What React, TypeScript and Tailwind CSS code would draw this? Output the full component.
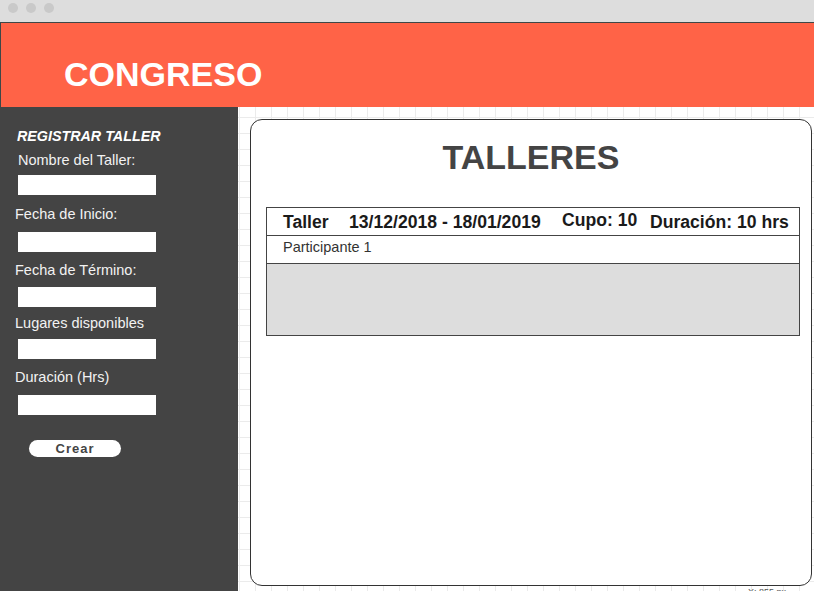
import React from 'react';

const labels = [
  { text: 'Nombre del Taller:', labelClass: 'mt-[8px] pl-[18px]', inputClass: 'mt-[7px]' },
  { text: 'Fecha de Inicio:', labelClass: 'mt-[11px] pl-[15px]', inputClass: 'mt-[10px]' },
  { text: 'Fecha de Término:', labelClass: 'mt-[10px] pl-[15px]', inputClass: 'mt-[9px]' },
  { text: 'Lugares disponibles', labelClass: 'mt-[8px] pl-[15px]', inputClass: 'mt-[8px]' },
  { text: 'Duración (Hrs)', labelClass: 'mt-[10px] pl-[15px]', inputClass: 'mt-[10px]' },
];

function Sidebar() {
  return (
    <aside className="w-[238px] shrink-0 bg-[#444444] flex flex-col pt-[21px]">
      <h2 className="pl-[17px] text-[14.3px] leading-[16px] font-bold italic text-white">REGISTRAR TALLER</h2>
      {labels.map((l) => (
        <React.Fragment key={l.text}>
          <label className={`${l.labelClass} text-[14.5px] leading-[16px] text-[#f2f2f2]`}>{l.text}</label>
          <input className={`${l.inputClass} ml-[18px] w-[138px] h-[20px] bg-white border-0 outline-none`} />
        </React.Fragment>
      ))}
      <button className="mt-[25px] ml-[29px] w-[92px] h-[17px] rounded-full bg-white text-[13px] leading-[17px] font-bold tracking-[1px] text-[#444444]">
        Crear
      </button>
    </aside>
  );
}

function Talleres() {
  return (
    <div className="h-[467px] shrink-0 border border-[#333333] rounded-[12px] bg-white flex flex-col">
      <h1 className="mt-[18px] text-center text-[34px] leading-[38px] font-bold text-[#444444]">TALLERES</h1>

      {/* tabla del taller */}
      <div className="mt-[31px] ml-[15px] w-[534px] border border-[#444444]">
        <div className="h-[27px] grid grid-cols-[66px_213px_88px_1fr] items-center pl-[16px] text-[17.6px] leading-[20px] font-bold text-[#1a1a1a] whitespace-nowrap">
          <span>Taller</span>
          <span>13/12/2018 - 18/01/2019</span>
          <span className="mb-[4px]">Cupo: 10</span>
          <span>Duración: 10 hrs</span>
        </div>
        <div className="h-[28px] border-t border-[#444444] pl-[16px] pt-[3px] text-[14.5px] leading-[16px] text-[#333333]">
          Participante 1
        </div>
        <div className="h-[72px] border-t border-[#444444] bg-[#dddddd]" />
      </div>
    </div>
  );
}

export default function App() {
  return (
    <div className="w-[814px] h-[591px] overflow-hidden flex flex-col bg-white font-['Liberation_Sans',Arial,sans-serif]">
      {/* barra de ventana */}
      <div className="h-[22px] shrink-0 bg-[#dddddd] flex items-start gap-[8px] pl-[8px] pt-[3px]">
        <span className="w-[10px] h-[10px] rounded-full bg-[#c9c9c9]" />
        <span className="w-[10px] h-[10px] rounded-full bg-[#c9c9c9]" />
        <span className="w-[10px] h-[10px] rounded-full bg-[#c9c9c9]" />
      </div>

      {/* encabezado */}
      <header className="h-[85px] shrink-0 bg-[#ff6347] border-t border-l border-[#3e4747] pl-[63px] pt-[32px]">
        <span className="text-[34px] leading-[38px] font-bold text-white">CONGRESO</span>
      </header>

      <div className="flex flex-1 min-h-0">
        <Sidebar />
        <main className="flex-1 flex flex-col pl-[12px] pt-[12px] pr-[2px] bg-white bg-[linear-gradient(to_right,#ebebeb_1px,transparent_1px),linear-gradient(to_bottom,#ebebeb_1px,transparent_1px)] bg-[size:16px_16px] bg-[position:1px_10px]">
          <Talleres />
          <div className="flex justify-end pr-[26px] pt-[1px] text-[9px] leading-[10px] text-[#555555]">X: 855 px</div>
        </main>
      </div>
    </div>
  );
}
